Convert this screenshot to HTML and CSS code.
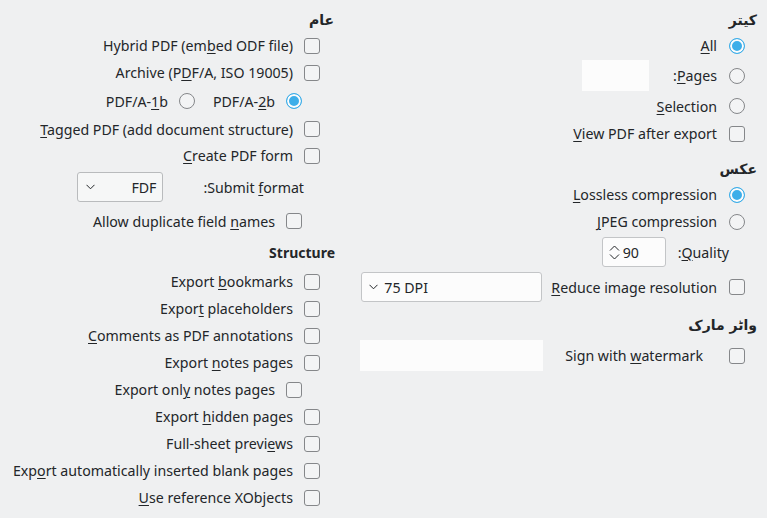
FILE: index.html
```html
<!DOCTYPE html>
<html lang="ur" dir="rtl">
<head>
<meta charset="utf-8">
<title>PDF Options</title>
<link rel="stylesheet" href="styles.css">
</head>
<body>
<div class="dialog">
  <section class="col col-right">
    <div class="heading h-first">کیتر</div>
    <div class="row r-all"><span class="radio on"></span><span class="lbl" dir="ltr"><u>A</u>ll</span></div>
    <div class="row r-pages"><span class="radio"></span><span class="lbl" dir="ltr">:<u>P</u>ages</span><span class="entry pages-entry"></span></div>
    <div class="row r-sel"><span class="radio"></span><span class="lbl" dir="ltr"><u>S</u>election</span></div>
    <div class="row r-view"><span class="check"></span><span class="lbl" dir="ltr"><u>V</u>iew PDF after export</span></div>

    <div class="heading h-images">عکس</div>
    <div class="row r-lossless"><span class="radio on"></span><span class="lbl" dir="ltr"><u>L</u>ossless compression</span></div>
    <div class="row r-jpeg"><span class="radio"></span><span class="lbl" dir="ltr"><u>J</u>PEG compression</span></div>
    <div class="row r-quality"><span class="lbl" dir="ltr">:<u>Q</u>uality</span>
      <span class="spin" dir="ltr"><svg class="spin-arrows" width="11" height="17" viewBox="0 0 11 17"><path d="M1 6.5 L5.5 2 L10 6.5 M1 10.5 L5.5 15 L10 10.5" fill="none" stroke="#232629" stroke-width="1"/></svg><span class="spin-val">90</span></span>
    </div>
    <div class="row r-reduce"><span class="check"></span><span class="lbl" dir="ltr"><u>R</u>educe image resolution</span>
      <span class="combo dpi-combo" dir="ltr"><svg class="chev" width="9" height="6" viewBox="0 0 9 6"><path d="M0.5 0.8 L4.5 4.8 L8.5 0.8" fill="none" stroke="#232629" stroke-width="1"/></svg><span class="combo-text">75 DPI</span></span>
    </div>

    <div class="heading h-wm">واٹر مارک</div>
    <div class="row r-sign"><span class="check"></span><span class="lbl sign-lbl" dir="ltr">Sign with <u>w</u>atermark</span><span class="entry wm-entry"></span></div>
  </section>

  <section class="col col-left">
    <div class="heading h-first">عام</div>
    <div class="row"><span class="check"></span><span class="lbl" dir="ltr">Hybrid PDF (em<u>b</u>ed ODF file)</span></div>
    <div class="row"><span class="check"></span><span class="lbl" dir="ltr">Archive (P<u>D</u>F/A, ISO 19005)</span></div>
    <div class="row r-pdfa">
      <span class="radio on"></span><span class="lbl" dir="ltr">PDF/A-<u>2</u>b</span>
      <span class="radio second"></span><span class="lbl" dir="ltr">PDF/A-<u>1</u>b</span>
    </div>
    <div class="row r-tagged"><span class="check"></span><span class="lbl" dir="ltr"><u>T</u>agged PDF (add document structure)</span></div>
    <div class="row"><span class="check"></span><span class="lbl" dir="ltr"><u>C</u>reate PDF form</span></div>
    <div class="row r-submit"><span class="lbl" dir="ltr">:Submit <u>f</u>ormat</span>
      <span class="combo btn-combo" dir="ltr"><svg class="chev" width="9" height="6" viewBox="0 0 9 6"><path d="M0.5 0.8 L4.5 4.8 L8.5 0.8" fill="none" stroke="#232629" stroke-width="1"/></svg><span class="combo-text">FDF</span></span>
    </div>
    <div class="row r-allow sub"><span class="check"></span><span class="lbl" dir="ltr">Allow duplicate field <u>n</u>ames</span></div>

    <div class="heading h-structure" dir="ltr">Structure</div>
    <div class="row"><span class="check"></span><span class="lbl" dir="ltr">Export <u>b</u>ookmarks</span></div>
    <div class="row"><span class="check"></span><span class="lbl" dir="ltr">Expor<u>t</u> placeholders</span></div>
    <div class="row"><span class="check"></span><span class="lbl" dir="ltr"><u>C</u>omments as PDF annotations</span></div>
    <div class="row"><span class="check"></span><span class="lbl" dir="ltr">Export <u>n</u>otes pages</span></div>
    <div class="row sub"><span class="check"></span><span class="lbl" dir="ltr">Export onl<u>y</u> notes pages</span></div>
    <div class="row"><span class="check"></span><span class="lbl" dir="ltr">Export <u>h</u>idden pages</span></div>
    <div class="row"><span class="check"></span><span class="lbl" dir="ltr">Full-sheet previ<u>e</u>ws</span></div>
    <div class="row"><span class="check"></span><span class="lbl" dir="ltr">Exp<u>o</u>rt automatically inserted blank pages</span></div>
    <div class="row"><span class="check"></span><span class="lbl" dir="ltr"><u>U</u>se reference XObjects</span></div>
  </section>
</div>
</body>
</html>
```

FILE: styles.css
```css
html, body {
  margin: 0;
  padding: 0;
  background: #eff0f1;
}
body {
  font-family: "Noto Sans", "DejaVu Sans", sans-serif;
  font-size: 14.2px;
  color: #232629;
  width: 767px;
  height: 518px;
  overflow: hidden;
}
.dialog {
  display: flex;
  flex-direction: row;
  width: 767px;
  height: 518px;
}
.col {
  display: flex;
  flex-direction: column;
}
.col-right { width: 423px; }
.col-left { width: 344px; }
u {
  text-decoration: underline;
  text-underline-offset: 2px;
  text-decoration-thickness: 1px;
}
.heading {
  font-weight: bold;
  font-family: "DejaVu Sans", "Noto Sans", sans-serif;
  font-size: 14px;
  display: flex;
  align-items: center;
  justify-content: flex-start;
  padding-right: 10px;
}
.h-first { height: 24px; margin-top: 8px; }
.h-images { height: 24px; padding-top: 10px; }
.h-wm { height: 30px; padding-top: 5px; }
.h-structure {
  height: 31px;
  font-family: "Noto Sans", sans-serif;
  justify-content: flex-end;
  padding-right: 0;
  padding-left: 0;
  margin-right: 9px;
}

.row {
  display: flex;
  align-items: center;
  height: 27px;
  white-space: nowrap;
}
.col-right .row { padding-right: 22px; }
.col-left .row { padding-right: 24px; }
.col-left .row.sub { padding-right: 42px; }

.lbl { unicode-bidi: isolate; }
.check + .lbl, .radio + .lbl { margin-right: 11px; }
.col-right .check + .lbl, .col-right .radio + .lbl { margin-right: 12px; }

.check {
  box-sizing: border-box;
  width: 16px;
  height: 16px;
  border: 1px solid #85878a;
  border-radius: 3px;
  background: #f3f4f5;
  flex: none;
}
.radio {
  box-sizing: border-box;
  width: 16px;
  height: 16px;
  border: 1px solid #85878a;
  border-radius: 50%;
  background: #f3f4f5;
  flex: none;
}
.radio.on {
  border-color: #3daee9;
  background: #3daee9;
  box-shadow: inset 0 0 0 2px #fcfcfc;
}

.entry {
  display: block;
  background: #fcfcfc;
  flex: none;
}
.r-pages { height: 33px; }
.pages-entry { width: 67px; height: 31px; margin-right: 24px; }
.r-sel { height: 28px; }

.r-quality { height: 34px; padding-right: 38px !important; }
.spin {
  box-sizing: border-box;
  width: 64px;
  height: 30px;
  margin-right: 12px;
  background: #fcfcfc;
  border: 1px solid #c3c5c7;
  border-radius: 3px;
  display: flex;
  align-items: center;
  justify-content: flex-start;
  padding-left: 6px;
  flex: none;
}
.spin-val { margin-left: 3px; }
.spin-arrows { display: block; }

.r-reduce { height: 36px; }
.combo {
  box-sizing: border-box;
  display: flex;
  align-items: center;
  flex: none;
  border-radius: 3px;
}
.dpi-combo {
  width: 181px;
  height: 30px;
  margin-right: 9px;
  background: #fcfcfc;
  border: 1px solid #c3c5c7;
  justify-content: flex-start;
  padding-left: 7px;
}
.dpi-combo .combo-text { margin-left: 6px; }
.chev { display: block; }

.r-sign { height: 31px; }
.sign-lbl { margin-right: 26px !important; }
.wm-entry { width: 183px; height: 31px; margin-right: 22px; }

.r-pdfa { height: 30px; padding-right: 42px !important; }
.radio.second { margin-right: 18px; }
.r-tagged { height: 26px; }
.r-submit { height: 36px; padding-right: 40px !important; }
.btn-combo {
  width: 86px;
  height: 30px;
  margin-right: 40px;
  background: #f6f7f7;
  border: 1px solid #b9bbbd;
  justify-content: space-between;
  padding: 0 6px 0 8px;
}
.r-allow { height: 32px; }
```
